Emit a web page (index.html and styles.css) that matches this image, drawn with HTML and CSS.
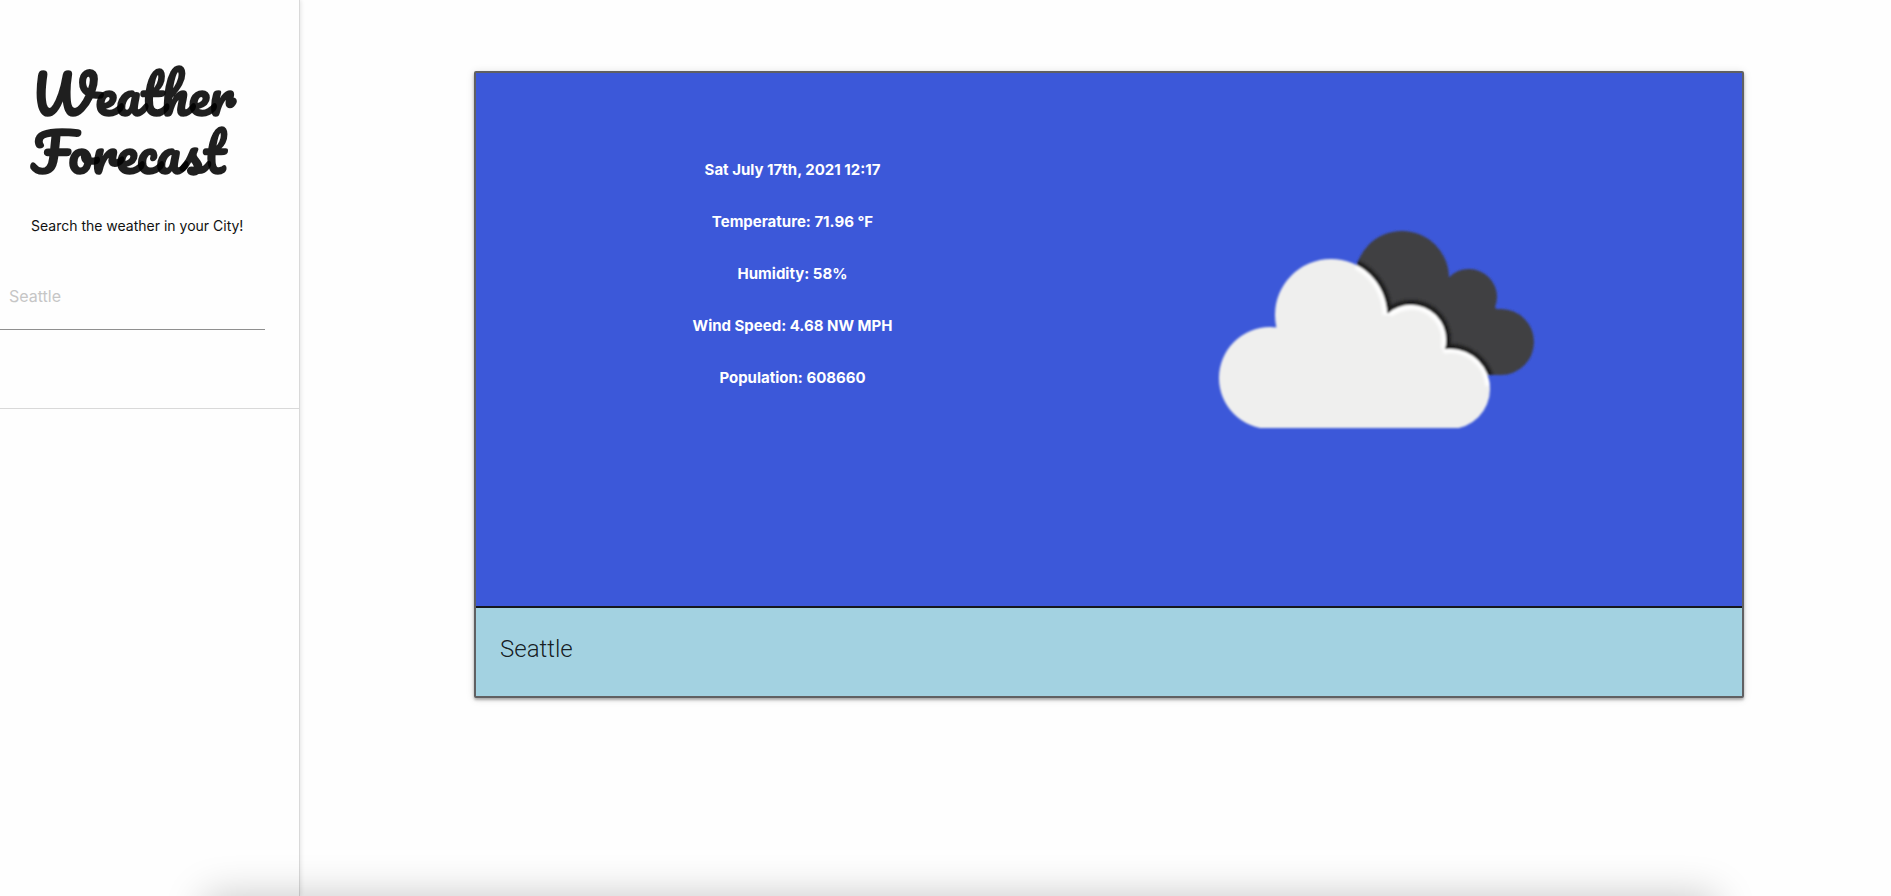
FILE: index.html
```html
<!DOCTYPE html>
<html lang="en">
<head>
<meta charset="utf-8">
<title>Weather Forecast</title>
<link rel="stylesheet" href="styles.css">
</head>
<body>
<div class="page">
  <aside class="sidebar">
    <header class="intro">
      <h1 class="title">Weather Forecast</h1>
      <p class="lead">Search the weather in your City!</p>
    </header>
    <form class="search">
      <input class="search-input" type="text" name="city" placeholder="Seattle" aria-label="City">
    </form>
  </aside>
  <main class="main">
    <article class="card">
      <div class="current">
        <div class="details">
          <p>Sat July 17th, 2021 12:17</p>
          <p>Temperature: 71.96 °F</p>
          <p>Humidity: 58%</p>
          <p>Wind Speed: 4.68 NW MPH</p>
          <p>Population: 608660</p>
        </div>
        <div class="picture">
          <svg class="cloud" viewBox="0 0 350 225" role="img" aria-label="Broken clouds">
            <defs>
              <clipPath id="back">
                <circle cx="202" cy="62" r="47"/>
                <circle cx="269" cy="81" r="28"/>
                <circle cx="301" cy="126" r="33"/>
                <path d="M202 62L247 62L269 75L297 93L301 159L230 158L160 85Z"/>
              </clipPath>
              <clipPath id="front">
                <circle cx="70" cy="162" r="51"/>
                <circle cx="131" cy="99" r="56"/>
                <circle cx="211" cy="124" r="35"/>
                <circle cx="250" cy="173" r="40"/>
                <path d="M70 112H78L131 90L187 97L211 110L244 134L250 213H70Z"/>
              </clipPath>
              <filter id="soft" x="-10%" y="-10%" width="120%" height="120%"><feGaussianBlur stdDeviation="1"/></filter>
              <filter id="edge" x="-5%" y="-5%" width="110%" height="110%"><feGaussianBlur stdDeviation="0.8"/></filter>
            </defs>
            <g filter="url(#edge)">
              <g clip-path="url(#back)">
                <rect width="350" height="225" fill="#404042"/>
                <g fill="#1b1b1d" filter="url(#soft)">
                  <circle cx="131" cy="99" r="61"/>
                  <circle cx="211" cy="124" r="40"/>
                  <circle cx="250" cy="173" r="45"/>
                </g>
              </g>
              <g clip-path="url(#front)">
                <rect width="350" height="212" fill="#efefee"/>
                <g fill="none" stroke="#fff" stroke-width="9" filter="url(#soft)">
                  <path d="M157 49A56 56 0 0 1 187 99"/>
                  <path d="M189 97A35 35 0 0 1 245 133"/>
                  <path d="M243 133A40 40 0 0 1 290 170"/>
                </g>
              </g>
            </g>
          </svg>
        </div>
      </div>
      <h2 class="city">Seattle</h2>
    </article>
  </main>
</div>
<div class="shade"></div>
</body>
</html>
```
FILE: styles.css
```css
* {
  box-sizing: border-box;
}

body {
  margin: 0;
  background: #fefefe;
  color: rgba(0, 0, 0, 0.87);
  font: 15px/22px Inter, Roboto, sans-serif;
  overflow: hidden;
}

.page {
  display: flex;
  min-height: 100vh;
}

.sidebar {
  flex: 0 0 300px;
  border-right: 1px solid #d9d9d9;
  box-shadow: 1px 0 4px rgba(0, 0, 0, 0.1);
}

.intro {
  padding: 65px 31px 0;
}

.title {
  margin: 0;
  color: rgba(0, 0, 0, 0.88);
  font: 700 53px/58px Pacifico, Lato, cursive;
}

.lead {
  margin: 34px 0 0;
  white-space: nowrap;
  color: #111;
  font-size: 14px;
}

.search {
  margin-top: 26px;
  padding: 0 34px 78px 0;
  border-bottom: 1px solid #d9d9d9;
}

.search-input {
  display: block;
  width: 100%;
  height: 67px;
  padding: 0 9px;
  border: 0;
  border-bottom: 1px solid #8f8f8f;
  border-radius: 0;
  background: transparent;
  font: 16px/24px Inter, Roboto, sans-serif;
  outline: none;
}

.search-input::placeholder {
  color: #c6c6c6;
  opacity: 1;
}

.main {
  flex: 1;
  padding: 71px 147px 0 174px;
}

.card {
  border: 2px solid #606062;
  border-radius: 2px;
  background: #a3d2e1;
  box-shadow: 0 2px 3px rgba(0, 0, 0, 0.3), 0 1px 8px rgba(0, 0, 0, 0.12);
}

.current {
  display: grid;
  grid-template-columns: 1fr 1fr;
  min-height: 535px;
  border-bottom: 2px solid #16181d;
  background: #3c58d9;
}

.details {
  display: flex;
  flex-direction: column;
  gap: 30px;
  padding-top: 86px;
  color: #fff;
  font-weight: 700;
  text-align: center;
}

.details p {
  margin: 0;
}

.picture {
  padding: 143px 0 0 91px;
}

.cloud {
  display: block;
  width: 350px;
}

.city {
  margin: 0;
  padding: 21px 24px 27px;
  font: 300 24px/40px Roboto, sans-serif;
}

.shade {
  position: fixed;
  top: 100%;
  left: 205px;
  right: 175px;
  height: 80px;
  box-shadow: 0 0 40px rgba(0, 0, 0, 0.22);
}
```
